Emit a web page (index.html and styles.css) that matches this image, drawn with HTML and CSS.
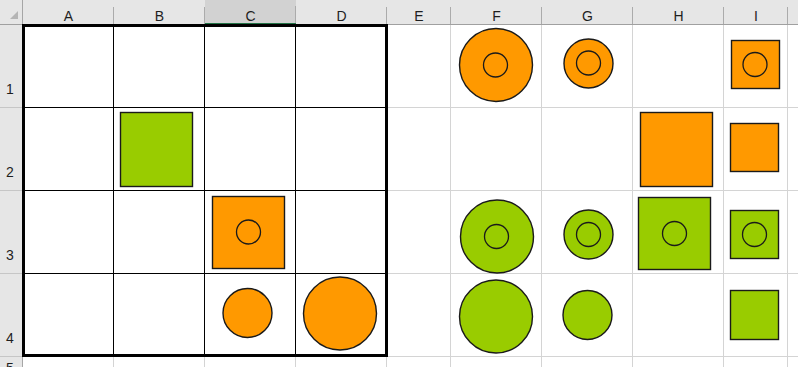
FILE: index.html
```html
<!DOCTYPE html>
<html lang="en">
<head>
    <meta charset="UTF-8">
    <meta name="viewport" content="width=device-width, initial-scale=1.0">
    <title>Sheet1</title>
    <link rel="stylesheet" href="styles.css">
</head>
<body>

<div class="workbook">
    <div class="sheet">
        <!-- column headers -->
        <div class="corner">
            <svg width="22" height="24" viewBox="0 0 22 24"><polygon points="18,11 18,19 10,19" fill="#b5b5b5"/></svg>
        </div>
        <div class="col-head">A</div>
        <div class="col-head">B</div>
        <div class="col-head selected">C</div>
        <div class="col-head">D</div>
        <div class="col-head">E</div>
        <div class="col-head">F</div>
        <div class="col-head">G</div>
        <div class="col-head">H</div>
        <div class="col-head">I</div>
        <div class="col-head last"></div>

        <!-- row 1 -->
        <div class="row-head">1</div>
        <div class="cell boxed"></div><div class="cell boxed"></div><div class="cell boxed"></div><div class="cell boxed"></div>
        <div class="cell"></div><div class="cell"></div><div class="cell"></div><div class="cell"></div><div class="cell"></div><div class="cell last"></div>

        <!-- row 2 -->
        <div class="row-head">2</div>
        <div class="cell boxed"></div><div class="cell boxed"></div><div class="cell boxed"></div><div class="cell boxed"></div>
        <div class="cell"></div><div class="cell"></div><div class="cell"></div><div class="cell"></div><div class="cell"></div><div class="cell last"></div>

        <!-- row 3 -->
        <div class="row-head">3</div>
        <div class="cell boxed"></div><div class="cell boxed"></div><div class="cell boxed"></div><div class="cell boxed"></div>
        <div class="cell"></div><div class="cell"></div><div class="cell"></div><div class="cell"></div><div class="cell"></div><div class="cell last"></div>

        <!-- row 4 -->
        <div class="row-head">4</div>
        <div class="cell boxed"></div><div class="cell boxed"></div><div class="cell boxed"></div><div class="cell boxed"></div>
        <div class="cell"></div><div class="cell"></div><div class="cell"></div><div class="cell"></div><div class="cell"></div><div class="cell last"></div>

        <!-- row 5 -->
        <div class="row-head short">5</div>
        <div class="cell"></div><div class="cell"></div><div class="cell"></div><div class="cell"></div>
        <div class="cell"></div><div class="cell"></div><div class="cell"></div><div class="cell"></div><div class="cell"></div><div class="cell last"></div>
    </div>

    <!-- thick outline round A1:D4 -->
    <div class="sheet borders">
        <div class="outline"></div>
    </div>

    <!-- drawing layer -->
    <svg class="shapes" width="798" height="377" viewBox="0 0 798 377">
        <g class="orange">
            <circle cx="496" cy="65" r="36.5"/>
            <circle cx="588.5" cy="63.5" r="24.5"/>
            <rect x="731.5" y="40.5" width="48" height="48"/>
            <rect x="640.5" y="112.5" width="72" height="74"/>
            <rect x="730.5" y="123.5" width="48" height="48"/>
            <rect x="212.5" y="196.5" width="72" height="72"/>
            <circle cx="247.5" cy="313" r="24.5"/>
            <circle cx="340" cy="313.5" r="36.5"/>
        </g>
        <g class="green">
            <rect x="120.5" y="112.5" width="72" height="74"/>
            <circle cx="497" cy="236.5" r="36.5"/>
            <circle cx="588.5" cy="234.5" r="24.5"/>
            <rect x="638.5" y="197.5" width="72" height="72"/>
            <rect x="730.5" y="210.5" width="48" height="48"/>
            <circle cx="496" cy="316.5" r="36.5"/>
            <circle cx="587.5" cy="315" r="24.5"/>
            <rect x="730.5" y="290.5" width="48" height="49"/>
        </g>
        <g class="ring">
            <circle cx="495.5" cy="65" r="12"/>
            <circle cx="588.5" cy="63" r="12"/>
            <circle cx="755" cy="64.5" r="12"/>
            <circle cx="248.5" cy="232" r="12"/>
            <circle cx="496.5" cy="236.5" r="12"/>
            <circle cx="588.5" cy="234.5" r="12"/>
            <circle cx="674.5" cy="233.5" r="12"/>
            <circle cx="754.5" cy="234.5" r="12"/>
        </g>
    </svg>
</div>

</body>
</html>
```

FILE: styles.css
```css
body {
    margin: 0;
    overflow: hidden;
    background-color: #fff;
    font-family: "Liberation Sans", Arial, sans-serif;
}
.workbook {
    display: grid;
    width: 798px;
    height: 367px;
    overflow: hidden;
}
.workbook > * {
    grid-area: 1 / 1;
}
.sheet {
    display: grid;
    grid-template-columns: 23px repeat(4, 91px) 64px repeat(3, 91px) 64px 1fr;
    grid-template-rows: 25px repeat(4, 83px) 20px;
    width: 798px;
}
.corner {
    background-color: #e6e6e6;
    border-right: 1px solid #a6a6a6;
    border-bottom: 1px solid #a0a0a0;
    box-sizing: border-box;
}
.corner svg {
    display: block;
}
.col-head {
    box-sizing: border-box;
    padding-top: 8px;
    font-size: 14px;
    line-height: 16px;
    text-align: center;
    color: #1e1e1e;
    background-color: #e6e6e6;
    background-image: linear-gradient(#ababab, #ababab);
    background-size: 1px 17px;
    background-position: right bottom;
    background-repeat: no-repeat;
    border-bottom: 1px solid #a0a0a0;
}
.col-head.selected {
    background-color: #d2d2d2;
    border-bottom: 2px solid #217346;
}
.col-head.last {
    background-image: none;
}
.row-head {
    box-sizing: border-box;
    display: flex;
    justify-content: center;
    align-items: flex-end;
    padding-bottom: 10px;
    padding-right: 2px;
    font-size: 14px;
    line-height: 16px;
    color: #1e1e1e;
    background-color: #e6e6e6;
    border-right: 1px solid #a6a6a6;
    border-bottom: 1px solid #c6c6c6;
}
.row-head.short {
    align-items: flex-start;
    padding-top: 3px;
    padding-bottom: 0;
}
.cell {
    box-sizing: border-box;
    border-right: 1px solid #d4d4d4;
    border-bottom: 1px solid #d4d4d4;
}
.cell.boxed {
    border-color: #000;
}
.cell.last {
    border-right: none;
}
.borders {
    pointer-events: none;
}
.outline {
    grid-column: 2 / 6;
    grid-row: 2 / 6;
    margin: -1px -1px 0 -1px;
    border: 3px solid #000;
}
.shapes {
    display: block;
    pointer-events: none;
}
.shapes .orange {
    fill: #ff9900;
    stroke: #1a1a1a;
    stroke-width: 1.4;
}
.shapes .green {
    fill: #99cc00;
    stroke: #1a1a1a;
    stroke-width: 1.4;
}
.shapes .ring {
    fill: none;
    stroke: #1a1a1a;
    stroke-width: 1.3;
}
```
